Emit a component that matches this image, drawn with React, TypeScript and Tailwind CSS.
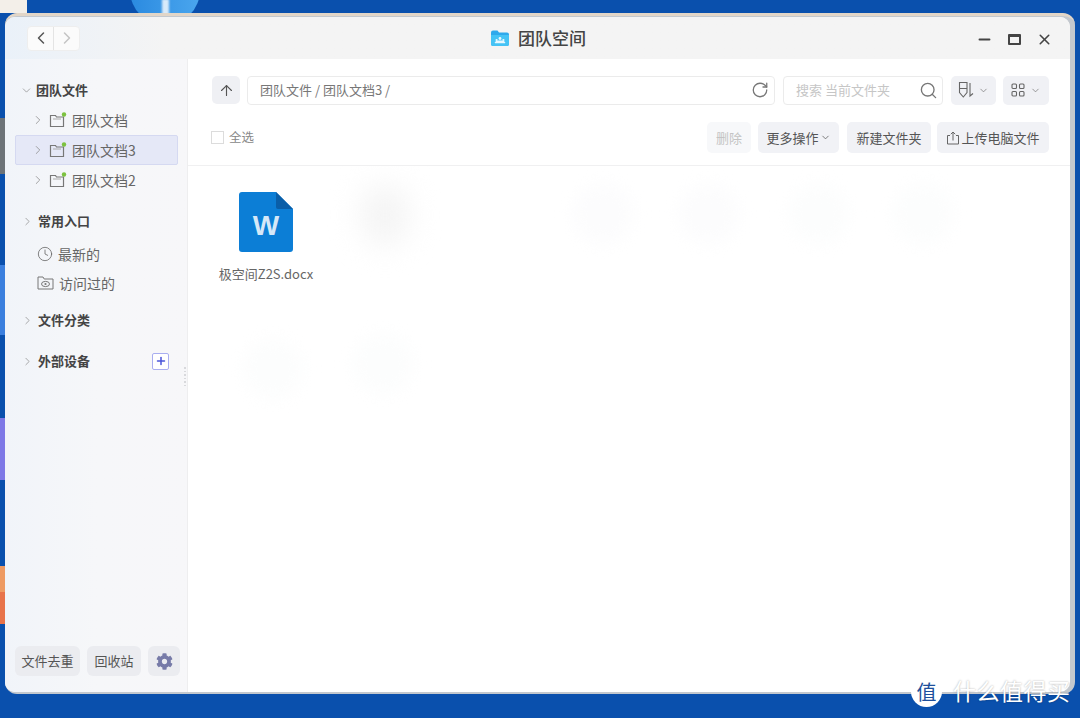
import { ChevronDown, ChevronLeft, ChevronRight, ArrowUp, RotateCw, Search, Clock, Minus, X, Plus } from "lucide-react";
import { FaCog } from "react-icons/fa";

const cjk = "font-['Noto_Sans_CJK_SC','Noto_Sans',sans-serif]";

function ShareFolder() {
  return (
    <svg width="18" height="16" viewBox="0 0 18 16" fill="none" className="shrink-0">
      <path d="M1.500 14.500V3.500h5l1 1.500h7v9.500z" stroke="#777" strokeWidth="1.200" />
      <path d="M4 7h8" stroke="#aaa" strokeWidth="1" />
      <circle cx="15" cy="2.500" r="2.200" fill="#7cc23f" />
    </svg>
  );
}

function EyeFolder() {
  return (
    <svg width="17" height="14" viewBox="0 0 17 14" fill="none" className="shrink-0">
      <path d="M1 13V1h5l1.200 2H16v10z" stroke="#777" strokeWidth="1" />
      <ellipse cx="8.500" cy="8" rx="4" ry="2.600" stroke="#777" strokeWidth="1" />
      <circle cx="8.500" cy="8" r="1.100" fill="#777" />
    </svg>
  );
}

function TitleIcon() {
  return (
    <svg width="20" height="18" viewBox="0 0 20 18" fill="none">
      <path d="M1 3.500A2 2 0 0 1 3 1.500h4.500l1.500 2h8a2 2 0 0 1 2 2V15a2 2 0 0 1-2 2H3a2 2 0 0 1-2-2z" fill="#2fa9ec" />
      <path d="M1 6h18v9a2 2 0 0 1-2 2H3a2 2 0 0 1-2-2z" fill="#45c3f5" />
      <circle cx="10" cy="9.500" r="1.400" fill="#e8f8ff" />
      <circle cx="6.600" cy="11" r="1.100" fill="#e8f8ff" />
      <circle cx="13.400" cy="11" r="1.100" fill="#e8f8ff" />
      <path d="M5 14.200h10v-1c-1-1.300-2-1.600-5-1.600s-4 .3-5 1.600z" fill="#e8f8ff" />
    </svg>
  );
}

function WordIcon() {
  return (
    <div className="relative w-[54px] h-[60px]">
      <svg width="54" height="60" viewBox="0 0 54 60">
        <path d="M3 0h34l17 17v40a3 3 0 0 1-3 3H3a3 3 0 0 1-3-3V3a3 3 0 0 1 3-3z" fill="#0c7ed6" />
        <path d="M37 0l17 17H39a2 2 0 0 1-2-2z" fill="#0a5ea8" />
      </svg>
      <span className="absolute inset-x-0 top-[17px] text-center text-[28px] leading-[34px] font-bold text-[#d6e8f8] font-['Liberation_Sans',sans-serif]">W</span>
    </div>
  );
}

function SectionHead({ label, open = false, right }: { label: string; open?: boolean; right?: React.ReactNode }) {
  return (
    <div className="flex items-center h-[20px] pl-[16px] pr-[18px]">
      {open ? (
        <ChevronDown size={13} strokeWidth={1.300} className="text-[#888] -ml-[1px] mr-[3px]" />
      ) : (
        <ChevronRight size={13} strokeWidth={1.300} className="text-[#888] mr-[4px]" />
      )}
      <span className="text-[13px] font-bold text-[#444] flex-1">{label}</span>
      {right}
    </div>
  );
}

function FolderRow({ label, active = false }: { label: string; active?: boolean }) {
  return (
    <div
      className={`flex items-center h-[30px] mx-[10px] w-[163px] pl-[15px] rounded-[2px] border ${
        active ? "bg-[#e5e8f7] border-[#d5d9f1]" : "border-transparent"
      }`}
    >
      <ChevronRight size={14} strokeWidth={1.300} className="text-[#888] mr-[4px] shrink-0" />
      <ShareFolder />
      <span className="ml-[5px] text-[14px] text-[#666]">{label}</span>
    </div>
  );
}

function ActionButton({ children, className = "" }: { children: React.ReactNode; className?: string }) {
  return (
    <div className={`flex items-center justify-center h-[31px] rounded-[5px] text-[13px] ${className}`}>
      {children}
    </div>
  );
}

export default function App() {
  return (
    <div className={`relative w-[1080px] h-[718px] overflow-hidden bg-[#0a50ad] ${cjk}`}>
      {/* desktop behind the window */}
      <div className="absolute left-0 top-0 w-[27px] h-[13px] bg-[#f3efe9]" />
      <div className="absolute left-[130px] -top-[45px] w-[70px] h-[70px] rounded-full bg-gradient-to-r from-[#2a8ae0] to-[#4aa6ee]">
        <div className="absolute left-[32px] top-[44px] w-[7px] h-[16px] bg-white/80 blur-[1px]" />
      </div>
      <div className="absolute left-0 top-[118px] w-[5px] h-[56px] bg-[#6d7378]" />
      <div className="absolute left-0 top-[265px] w-[5px] h-[70px] bg-[#3b7fde]" />
      <div className="absolute left-0 top-[418px] w-[5px] h-[62px] bg-[#7e78e6]" />
      <div className="absolute left-0 top-[566px] w-[5px] h-[26px] bg-[#ee9a62]" />
      <div className="absolute left-0 top-[592px] w-[5px] h-[32px] bg-[#e8734a]" />

      {/* window */}
      <div className="absolute left-[5px] top-[13px] w-[1070px] h-[681px] rounded-[12px] bg-[#c3c8ce] pt-[1px] pr-[5px] pb-[2px] border-t-[3px] border-[#e2d6c8]">
        <div className="relative flex flex-col w-full h-full rounded-[10px] overflow-hidden bg-white">
          {/* title bar */}
          <div className="relative flex items-center h-[42px] shrink-0 bg-gradient-to-r from-[#eaf1f9] via-[#f4f4f4] via-15% to-[#f4f4f4] pl-[22px] pr-[17px]">
            <div className="flex w-[53px] h-[25px] rounded-[4px] bg-[#fbfbfb] border border-[#eeeeee]">
              <div className="flex-1 flex items-center justify-center border-r border-[#e4e4e4]">
                <ChevronLeft size={20} strokeWidth={1.800} className="text-[#555]" />
              </div>
              <div className="flex-1 flex items-center justify-center">
                <ChevronRight size={20} strokeWidth={1.800} className="text-[#c4c4c4]" />
              </div>
            </div>
            <div className="flex-1" />
            <div className="absolute left-[485px] top-[9px] flex items-center gap-[8px]">
              <TitleIcon />
              <span className="text-[17px] leading-[24px] font-medium text-[#444]">团队空间</span>
            </div>
            <div className="flex items-center gap-[13px] mt-[2px] text-[#444]">
              <Minus size={17} strokeWidth={2.800} />
              <div className="w-[13px] h-[11px] mx-[2px] border-[2px] border-t-[3px] border-[#444] rounded-[1px]" />
              <X size={17} strokeWidth={2.200} />
            </div>
          </div>

          <div className="flex flex-1 min-h-0">
            {/* sidebar */}
            <div className="relative flex flex-col w-[183px] shrink-0 pt-[21px] pb-[16px] bg-gradient-to-r from-[#f1f4f9] via-[#f6f7f9] to-[#f7f7f9] border-r border-[#eeeeef]">
              <SectionHead label="团队文件" open />
              <div className="mt-[5px]">
                <FolderRow label="团队文档" />
                <FolderRow label="团队文档3" active />
                <FolderRow label="团队文档2" />
              </div>
              <div className="mt-[16px]">
                <SectionHead label="常用入口" />
              </div>
              <div className="flex items-center h-[30px] mt-[8px] pl-[32px] gap-[5px] text-[14px] text-[#666]">
                <Clock size={16} strokeWidth={1.200} className="text-[#666]" />
                最新的
              </div>
              <div className="flex items-center h-[28px] pl-[32px] gap-[5px] text-[14px] text-[#666]">
                <EyeFolder />
                访问过的
              </div>
              <div className="mt-[13px]">
                <SectionHead label="文件分类" />
              </div>
              <div className="mt-[21px]">
                <SectionHead
                  label="外部设备"
                  right={
                    <div className="flex items-center justify-center w-[17px] h-[17px] rounded-[2px] bg-white border border-[#a9aef0]">
                      <Plus size={12} strokeWidth={3} className="text-[#4a55d8]" />
                    </div>
                  }
                />
              </div>
              <div className="flex-1" />
              <div className="flex items-center pl-[10px] gap-[7px]">
                <div className="flex items-center justify-center w-[65px] h-[30px] rounded-[6px] bg-[#ebecf0] text-[13px] text-[#555]">文件去重</div>
                <div className="flex items-center justify-center w-[54px] h-[30px] rounded-[6px] bg-[#ebecf0] text-[13px] text-[#555]">回收站</div>
                <div className="flex items-center justify-center w-[32px] h-[30px] rounded-[6px] bg-[#ebecf0]">
                  <FaCog size={17} className="text-[#777ba8]" />
                </div>
              </div>
              {/* resize grip */}
              <div className="absolute right-[1px] top-[308px] flex flex-col gap-[2px]">
                {[0, 1, 2, 3, 4, 5].map((i) => (
                  <div key={i} className="w-[2px] h-[1.500px] bg-[#d8d9dc]" />
                ))}
              </div>
            </div>

            {/* file area */}
            <div className="relative flex-1 min-w-0 flex flex-col">
              {/* faint watermark shapes */}
              <div className="absolute left-[172px] top-[125px] w-[50px] h-[62px] rounded-full bg-[#f5f5f5] blur-[14px]" />
              <div className="absolute left-[385px] top-[125px] w-[60px] h-[60px] rounded-full bg-[#fcfcfd] blur-[8px]" />
              <div className="absolute left-[490px] top-[125px] w-[60px] h-[60px] rounded-full bg-[#fcfcfd] blur-[8px]" />
              <div className="absolute left-[600px] top-[125px] w-[60px] h-[60px] rounded-full bg-[#fcfdfd] blur-[8px]" />
              <div className="absolute left-[705px] top-[125px] w-[60px] h-[60px] rounded-full bg-[#fcfdfd] blur-[8px]" />
              <div className="absolute left-[55px] top-[280px] w-[60px] h-[60px] rounded-full bg-[#fcfdfd] blur-[8px]" />
              <div className="absolute left-[165px] top-[275px] w-[60px] h-[60px] rounded-full bg-[#fcfdfd] blur-[8px]" />

              <div className="relative flex flex-col h-[107px] shrink-0 pt-[17px] pl-[24px] pr-[21px] border-b border-[#f0f0f1] bg-white">
                <div className="flex items-center h-[28px]">
                  <div className="flex items-center justify-center w-[28px] h-[28px] rounded-[5px] bg-[#eff0f4]">
                    <ArrowUp size={17} strokeWidth={1.600} className="text-[#555]" />
                  </div>
                  <div className="flex items-center w-[528px] h-[29px] ml-[7px] pl-[12px] pr-[5px] rounded-[4px] border border-[#ebebeb]">
                    <span className="flex-1 text-[13px] text-[#777]">团队文件 / 团队文档3 /</span>
                    <RotateCw size={18} strokeWidth={1.700} className="text-[#777]" />
                  </div>
                  <div className="flex items-center w-[160px] h-[29px] ml-[8px] pl-[12px] pr-[4px] rounded-[4px] border border-[#ebebeb]">
                    <span className="flex-1 text-[13px] text-[#c6c6c6]">搜索 当前文件夹</span>
                    <Search size={19} strokeWidth={1.700} className="text-[#777]" />
                  </div>
                  <div className="flex items-center justify-center gap-[4px] w-[45px] h-[29px] ml-[8px] rounded-[5px] bg-[#f0f1f5]">
                    <svg width="16" height="18" viewBox="0 0 16 18" fill="none" stroke="#666" strokeWidth="1.100">
                      <path d="M1.500 1.500h7.500v10l-3.700 4.500-3.800-4.500z" />
                      <path d="M1.500 7.500h7.500M12 2v13l3-2.500" />
                    </svg>
                    <ChevronDown size={11} strokeWidth={1.600} className="text-[#777]" />
                  </div>
                  <div className="flex items-center justify-center gap-[5px] w-[46px] h-[29px] ml-[7px] rounded-[5px] bg-[#f0f1f5]">
                    <svg width="14" height="14" viewBox="0 0 14 14" fill="none" stroke="#666" strokeWidth="1.100">
                      <rect x="1" y="1" width="4.500" height="4.500" rx="1" />
                      <rect x="8.500" y="1" width="4.500" height="4.500" rx="1" />
                      <rect x="1" y="8.500" width="4.500" height="4.500" rx="1" />
                      <rect x="8.500" y="8.500" width="4.500" height="4.500" rx="1" />
                    </svg>
                    <ChevronDown size={11} strokeWidth={1.600} className="text-[#777]" />
                  </div>
                </div>
                <div className="flex items-center mt-[18px]">
                  <div className="w-[13px] h-[13px] -ml-[1px] border border-[#dcdcdc] bg-white" />
                  <span className="ml-[5px] text-[12.500px] text-[#888]">全选</span>
                  <div className="flex-1" />
                  <ActionButton className="w-[44px] bg-[#f7f8fa] text-[#c4c4c4]">删除</ActionButton>
                  <ActionButton className="w-[81px] ml-[7px] gap-[1px] bg-[#f1f2f6] text-[#555]">
                    更多操作
                    <ChevronDown size={11} strokeWidth={1.800} className="text-[#666]" />
                  </ActionButton>
                  <ActionButton className="w-[84px] ml-[8px] bg-[#f1f2f6] text-[#555]">新建文件夹</ActionButton>
                  <ActionButton className="w-[112px] ml-[6px] gap-[1px] bg-[#f1f2f6] text-[#555]">
                    <svg width="14" height="14" viewBox="0 0 14 14" fill="none" stroke="#666" strokeWidth="1">
                      <path d="M4 4.500H1.500v8.500h11V4.500H10M7 9.500V1M4.800 3.200L7 1l2.200 2.200" />
                    </svg>
                    上传电脑文件
                  </ActionButton>
                </div>
              </div>

              <div className="relative flex flex-col items-center w-[96px] ml-[30px] mt-[26px]">
                <WordIcon />
                <span className="mt-[13px] text-[13px] leading-[18px] whitespace-nowrap text-[#666]">极空间Z2S.docx</span>
              </div>
            </div>
          </div>
        </div>
      </div>

      {/* site badge over the corner */}
      <div className="absolute left-[911px] top-[676px] flex items-center justify-center w-[31px] h-[31px] rounded-full bg-white text-[20px] leading-none text-[#1d4f9c]">
        值
      </div>
      <span className="absolute left-[953px] top-[675px] text-[23px] leading-[30px] tracking-[0.500px] whitespace-nowrap text-white [text-shadow:0_0_2px_rgba(0,0,0,0.350)]">
        什么值得买
      </span>
    </div>
  );
}
